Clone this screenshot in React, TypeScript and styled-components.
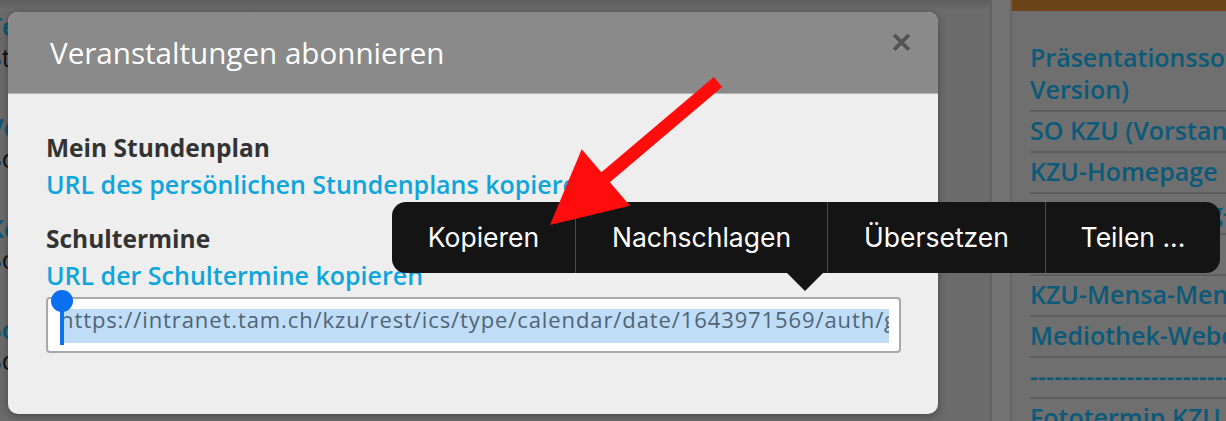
import React from "react";
import styled, { createGlobalStyle } from "styled-components";

const GlobalStyle = createGlobalStyle`
  html, body { margin: 0; padding: 0; background: #6b6b6b; }
  body { font-family: "Open Sans", sans-serif; }
  * { box-sizing: border-box; }
`;

const Stage = styled.div`
  position: relative;
  width: 1226px;
  height: 421px;
  overflow: hidden;
  background: linear-gradient(#5f5f5f 0px, #6b6b6b 10px);
`;

const Page = styled.div`
  display: grid;
  grid-template-columns: 990px 22px 1fr;
  height: 100%;
`;

const MainCol = styled.div`
  padding-top: 11px;
  margin-left: -12px;
  display: flex;
  flex-direction: column;
  font: 600 25px/31px "Open Sans", sans-serif;
  white-space: nowrap;
  overflow: hidden;
`;

const EntryGroup = styled.div`
  margin-bottom: 39px;
`;

const EntryLink = styled.div`
  color: #0b5877;
`;

const EntryText = styled.div`
  color: #111;
  font-weight: 400;
`;

const DateLine = styled.div`
  margin-top: 1px;
  margin-left: -1px;
  color: #0b5877;
`;

const SidebarEdge = styled.div`
  background: #737373;
  border-left: 2px solid #626262;
  border-right: 2px solid #656565;
`;

const SidebarPanel = styled.div`
  background: #6f6f6f;
  overflow: hidden;
`;

const BrownBar = styled.div`
  height: 11px;
  background: #6b4519;
`;

const LinkList = styled.ul`
  list-style: none;
  margin: 0;
  padding: 28px 0 0 18px;
`;

const SideLink = styled.li`
  padding: 2px 0 5px;
  border-bottom: 2px solid #5e5e5e;
  font: 600 25px/32px "Open Sans", sans-serif;
  color: #0c5a79;
  white-space: nowrap;
`;

const Modal = styled.div`
  position: absolute;
  left: 8px;
  top: 12px;
  width: 930px;
  height: 402px;
  border-radius: 10px;
  overflow: hidden;
  background: #eeeeee;
  box-shadow: 0 2px 8px rgba(0, 0, 0, 0.35);
`;

const ModalHeader = styled.div`
  height: 82px;
  background: #8a8a8a;
  border-bottom: 1px solid #b4b4b4;
  display: flex;
  align-items: flex-start;
  justify-content: space-between;
  padding: 0 27px 0 42px;
`;

const ModalTitle = styled.h2`
  margin: 0;
  font: 500 29.6px/81px "Open Sans", sans-serif;
  color: #ffffff;
`;

const CloseButton = styled.button`
  margin-top: 21px;
  width: 19px;
  height: 19px;
  padding: 0;
  border: 0;
  background: none;
  display: flex;
  svg { display: block; }
`;

const ModalBody = styled.div`
  padding: 38px 37px 0 38px;
`;

const Section = styled.section<{ $gap?: number }>`
  margin-top: ${(p) => p.$gap ?? 0}px;
`;

const Heading = styled.h3`
  margin: 0;
  font: 700 24.5px/32px "Open Sans", sans-serif;
  color: #333333;
`;

const CopyLink = styled.a`
  display: block;
  margin-top: 2px;
  font: 600 25px/36px "Open Sans", sans-serif;
  color: #0ea5dc;
  text-decoration: none;
  white-space: nowrap;
`;

const Field = styled.div`
  position: relative;
  margin-top: 4px;
  height: 56px;
  border: 2px solid #a8a8a8;
  border-radius: 4px;
  background: #ffffff;
  padding: 10px 10px 8px 12px;
`;

const Clip = styled.div`
  overflow: hidden;
  white-space: nowrap;
`;

const Selection = styled.span`
  display: inline-block;
  padding-bottom: 13px;
  background: #c0ddf7;
  font: 400 22px/21px "Open Sans", sans-serif;
  letter-spacing: 0.9px;
  color: #4f6476;
`;

const Caret = styled.span`
  position: absolute;
  left: 12px;
  top: 2px;
  width: 4px;
  height: 44px;
  background: #0b6ff2;
  &::before {
    content: "";
    position: absolute;
    left: -9px;
    top: -11px;
    width: 22px;
    height: 22px;
    border-radius: 50%;
    background: #0b6ff2;
  }
`;

const Callout = styled.div`
  position: absolute;
  left: 392px;
  top: 202px;
  height: 71px;
  display: flex;
  background: #141414;
  border-radius: 14px;
  &::after {
    content: "";
    position: absolute;
    left: 395px;
    bottom: -18px;
    border-top: 18px solid #141414;
    border-left: 18px solid transparent;
    border-right: 18px solid transparent;
  }
`;

const MenuItem = styled.div<{ $w: number; $first?: boolean }>`
  width: ${(p) => p.$w}px;
  display: flex;
  align-items: center;
  justify-content: center;
  border-left: ${(p) => (p.$first ? "0" : "1px solid #4a4a4a")};
  font: 400 26.5px/1 "Inter", sans-serif;
  color: #ffffff;
  white-space: nowrap;
`;

const Overlay = styled.svg`
  position: absolute;
  left: 0;
  top: 0;
  pointer-events: none;
`;

export default function App() {
  return (
    <>
      <GlobalStyle />
      <Stage>
        <Page>
          <MainCol>
            <EntryGroup>
              <EntryLink>Termine KZU</EntryLink>
              <EntryText>Stundenplan</EntryText>
            </EntryGroup>
            <EntryGroup>
              <EntryLink>Veranstaltungen</EntryLink>
              <EntryText>Sonntag</EntryText>
            </EntryGroup>
            <EntryGroup>
              <EntryLink>Konvent</EntryLink>
              <EntryText>Sonderwoche</EntryText>
            </EntryGroup>
            <EntryGroup>
              <EntryLink>Schulfest</EntryLink>
              <EntryText>Sommerferien</EntryText>
            </EntryGroup>
            <DateLine>Montag, 07. Februar 2022 bis Freitag, 11. Februar 2022</DateLine>
          </MainCol>
          <SidebarEdge />
          <SidebarPanel>
            <BrownBar />
            <LinkList>
              <SideLink>
                Präsentationssoftware (Web-
                <br />
                Version)
              </SideLink>
              <SideLink>SO KZU (Vorstand)</SideLink>
              <SideLink>KZU-Homepage</SideLink>
              <SideLink>Absenzmeldung-Formular</SideLink>
              <SideLink>KZU-Agenda</SideLink>
              <SideLink>KZU-Mensa-Menü</SideLink>
              <SideLink>Mediothek-Webopac</SideLink>
              <SideLink>------------------------------</SideLink>
              <SideLink>Fototermin KZU</SideLink>
            </LinkList>
          </SidebarPanel>
        </Page>

        <Modal>
          <ModalHeader>
            <ModalTitle>Veranstaltungen abonnieren</ModalTitle>
            <CloseButton aria-label="Schliessen">
              <svg width="19" height="19" viewBox="0 0 19 19">
                <path d="M2 2 L17 17 M17 2 L2 17" stroke="#e0e0e0" strokeWidth="4" strokeOpacity="0.35" transform="translate(0 1)" />
                <path d="M2 2 L17 17 M17 2 L2 17" stroke="#555555" strokeWidth="4" />
              </svg>
            </CloseButton>
          </ModalHeader>
          <ModalBody>
            <Section>
              <Heading>Mein Stundenplan</Heading>
              <CopyLink>URL des persönlichen Stundenplans kopieren</CopyLink>
            </Section>
            <Section $gap={21}>
              <Heading>Schultermine</Heading>
              <CopyLink>URL der Schultermine kopieren</CopyLink>
              <Field>
                <Clip>
                  <Selection>
                    https://intranet.tam.ch/kzu/rest/ics/type/calendar/date/1643971569/auth/g8x2k4m
                  </Selection>
                </Clip>
                <Caret />
              </Field>
            </Section>
          </ModalBody>
        </Modal>

        <Callout>
          <MenuItem $w={183} $first>Kopieren</MenuItem>
          <MenuItem $w={252}>Nachschlagen</MenuItem>
          <MenuItem $w={218}>Übersetzen</MenuItem>
          <MenuItem $w={175}>Teilen ...</MenuItem>
        </Callout>

        <Overlay width="1226" height="421" viewBox="0 0 1226 421">
          <line x1="718" y1="82" x2="600" y2="182" stroke="#ff0c0c" strokeWidth="13" />
          <polygon points="550,225 581.7,149.3 630,205.7" fill="#ff0c0c" />
        </Overlay>
      </Stage>
    </>
  );
}
